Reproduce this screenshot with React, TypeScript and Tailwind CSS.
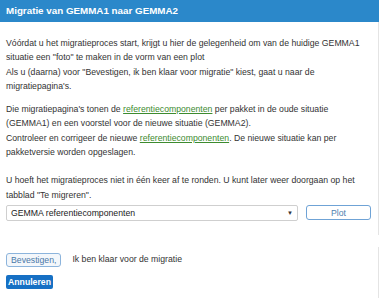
import React from "react";

const Link = ({ children }: { children: React.ReactNode }) => (
  <a href="#" className="text-[#3d8b2f] underline decoration-[#3d8b2f]">
    {children}
  </a>
);

export default function App() {
  return (
    <div className="w-[379px] h-[298px] bg-white overflow-hidden text-[#333333] font-['Liberation_Sans',Arial,sans-serif]">
      <div className="h-[22px] bg-[#2b88ca] flex items-center px-[6px]">
        <h1 className="text-white font-bold text-[9.8px] leading-none">Migratie van GEMMA1 naar GEMMA2</h1>
      </div>
      <div className="border-r border-[#e4e4e4] pl-[6px] pr-[4px] pt-[14px] h-[213px] text-[8.7px] leading-[14.3px]">
        <p className="whitespace-nowrap">
          Vóórdat u het migratieproces start, krijgt u hier de gelegenheid om van de huidige GEMMA1
          <br />
          situatie een "foto" te maken in de vorm van een plot
          <br />
          Als u (daarna) voor "Bevestigen, ik ben klaar voor migratie" kiest, gaat u naar de
          <br />
          migratiepagina's.
        </p>
        <p className="whitespace-nowrap mt-[9px]">
          Die migratiepagina's tonen de <Link>referentiecomponenten</Link> per pakket in de oude situatie
          <br />
          (GEMMA1) en een voorstel voor de nieuwe situatie (GEMMA2).
          <br />
          Controleer en corrigeer de nieuwe <Link>referentiecomponenten</Link>. De nieuwe situatie kan per
          <br />
          pakketversie worden opgeslagen.
        </p>
        <p className="whitespace-nowrap mt-[14px]">
          U hoeft het migratieproces niet in één keer af te ronden. U kunt later weer doorgaan op het
          <br />
          tabblad "Te migreren".
        </p>
        <div className="flex items-center mt-[3px] gap-[8px]">
          <div className="w-[292px] h-[16px] border border-[#cfcfcf] rounded-[2px] flex items-center justify-between px-[4px] text-[8.7px] text-[#222]">
            <span>GEMMA referentiecomponenten</span>
            <span className="text-[6px] text-[#333]">▼</span>
          </div>
          <button className="w-[65px] h-[15px] border border-[#6fa3d6] rounded-[3px] text-[8.7px] text-[#4f7fb0] bg-white leading-none">
            Plot
          </button>
        </div>
      </div>
      <div className="h-[12px]" />
      <div className="border-r border-[#e4e4e4] pl-[6px] pt-[6px] h-[51px]">
        <div className="flex items-center gap-[11px] h-[14px]">
          <button className="h-[14px] px-[4px] border border-[#8cb4dc] rounded-[3px] bg-[#f3f7fb] text-[8.7px] text-[#4a78a8] leading-none">
            Bevestigen,
          </button>
          <span className="text-[8.7px] text-[#333]">Ik ben klaar voor de migratie</span>
        </div>
        <button className="mt-[8px] h-[14px] px-[2px] rounded-[2px] bg-[#1670c4] text-white text-[8.7px] font-semibold leading-none">
          Annuleren
        </button>
      </div>
    </div>
  );
}
